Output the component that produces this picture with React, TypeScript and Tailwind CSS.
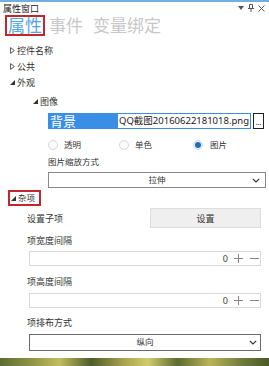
import React from "react";

const Collapsed = () => (
  <svg width="5" height="7" viewBox="0 0 5 7" className="shrink-0">
    <path d="M0.6 0.6 L4.4 3.5 L0.6 6.4 Z" fill="none" stroke="#555" strokeWidth="1" />
  </svg>
);

const Expanded = () => (
  <svg width="5" height="5" viewBox="0 0 5 5" className="shrink-0">
    <path d="M5 0 L5 5 L0 5 Z" fill="#333" />
  </svg>
);

const Chevron = () => (
  <svg width="8" height="5" viewBox="0 0 8 5" className="shrink-0">
    <path d="M0.8 0.8 L4 4 L7.2 0.8" fill="none" stroke="#333" strokeWidth="1.2" />
  </svg>
);

const Radio = ({ checked }: { checked?: boolean }) => (
  <span
    className={
      "w-[10px] h-[10px] rounded-full shrink-0 flex items-center justify-center " +
      (checked ? "border border-[#c9d9e8] bg-[#eef3f8]" : "border border-[#d8d8d8] bg-[#fafafa]")
    }
  >
    {checked ? <span className="w-[6px] h-[6px] rounded-full bg-[#1f6db5]" /> : null}
  </span>
);

const NumberBox = () => (
  <div className="ml-[29px] mr-[8px] h-[15px] border border-[#d9d9d9] bg-white flex items-center justify-end pr-[1px]">
    <span className="text-[9px] text-[#444] leading-none">0</span>
    <svg width="9" height="9" viewBox="0 0 9 9" className="ml-[6px]">
      <path d="M4.5 0 V9 M0 4.5 H9" stroke="#888" strokeWidth="1" />
    </svg>
    <svg width="9" height="9" viewBox="0 0 9 9" className="ml-[7px]">
      <path d="M0 4.5 H9" stroke="#888" strokeWidth="1" />
    </svg>
  </div>
);

export default function App() {
  return (
    <div className="w-[269px] h-[366px] overflow-hidden bg-white flex flex-col font-['Noto_Sans','Noto_Sans_CJK_SC',sans-serif] text-[#333] leading-none">
      {/* top accent */}
      <div className="h-[2px] bg-[#6fb0e0]" />
      {/* title bar */}
      <div className="h-[12px] flex items-center pl-[3px] pr-[4px]">
        <span className="text-[9px] text-[#222]">属性窗口</span>
        <div className="ml-auto flex items-center gap-[4px] text-[#555]">
          <svg width="6" height="4" viewBox="0 0 6 4">
            <path d="M0 0 H6 L3 4 Z" fill="#555" />
          </svg>
          <svg width="6" height="8" viewBox="0 0 6 8">
            <path d="M1.5 0.5 H4.5 V4.5 H1.5 Z M0 4.5 H6 M3 4.5 V8" fill="none" stroke="#555" strokeWidth="1" />
          </svg>
          <svg width="7" height="7" viewBox="0 0 7 7">
            <path d="M0.5 0.5 L6.5 6.5 M6.5 0.5 L0.5 6.5" stroke="#555" strokeWidth="1" />
          </svg>
        </div>
      </div>
      {/* tabs */}
      <div className="h-[23px] flex items-center pl-[5px]">
        <span className="border-2 border-[#c4262e] px-[1px] h-[21px] flex items-center text-[17px] text-[#55a6e4]">属性</span>
        <span className="ml-[4px] text-[17px] text-[#c8c8c8]">事件</span>
        <span className="ml-[10px] text-[17px] text-[#c8c8c8]">变量绑定</span>
      </div>
      {/* tree */}
      <div className="mt-[5px] h-[16px] flex items-center pl-[10px] gap-[2px]">
        <Collapsed />
        <span className="text-[9px]">控件名称</span>
      </div>
      <div className="h-[16px] flex items-center pl-[10px] gap-[2px]">
        <Collapsed />
        <span className="text-[9px]">公共</span>
      </div>
      <div className="h-[17px] flex items-center pl-[10px] gap-[2px]">
        <Expanded />
        <span className="text-[9px]">外观</span>
      </div>
      <div className="h-[20px] flex items-center pl-[33px] gap-[2px]">
        <Expanded />
        <span className="text-[9px]">图像</span>
      </div>
      {/* background image row */}
      <div className="mt-[2px] h-[16px] ml-[48px] flex items-stretch">
        <div className="w-[203px] bg-[#3a8ee6] flex items-center">
          <span className="pl-[2px] text-[13px] text-white">背景</span>
          <div className="ml-auto w-[134px] h-full bg-white border border-[#3a8ee6] flex items-center overflow-hidden">
            <span className="pl-[1px] text-[9.5px] text-[#222] whitespace-nowrap">QQ截图20160622181018.png</span>
          </div>
        </div>
        <div className="ml-[2px] w-[11px] border border-[#222] bg-white flex items-end justify-center pb-[2px]">
          <span className="text-[7px] leading-none text-[#222]">...</span>
        </div>
      </div>
      {/* radios */}
      <div className="mt-[8px] h-[16px] ml-[48px] flex items-center">
        <div className="w-[71px] flex items-center gap-[6px]">
          <Radio />
          <span className="text-[8.5px]">透明</span>
        </div>
        <div className="w-[74px] flex items-center gap-[6px]">
          <Radio />
          <span className="text-[8.5px]">单色</span>
        </div>
        <div className="flex items-center gap-[7px]">
          <Radio checked />
          <span className="text-[8.5px]">图片</span>
        </div>
      </div>
      <div className="mt-[1px] h-[16px] ml-[48px] flex items-center">
        <span className="text-[8.5px]">图片缩放方式</span>
      </div>
      <div className="mt-[2px] h-[16px] ml-[48px] mr-[3px] border border-[#8a8a8a] bg-white flex items-center px-[5px]">
        <span className="w-[8px]" />
        <span className="flex-1 text-center text-[8.5px]">拉伸</span>
        <Chevron />
      </div>
      {/* misc */}
      <div className="mt-[2px] h-[16px] ml-[8px] w-[33px] border-2 border-[#c4262e] flex items-center pl-[1px] gap-[2px]">
        <Expanded />
        <span className="text-[8.5px]">杂项</span>
      </div>
      <div className="mt-[2px] h-[20px] flex items-center pl-[27px] pr-[8px]">
        <span className="flex-1 text-[9px]">设置子项</span>
        <div className="w-[111px] h-full bg-[#efefef] border border-[#dedede] flex items-center justify-center">
          <span className="text-[9px]">设置</span>
        </div>
      </div>
      <div className="mt-[4px] h-[16px] flex items-center pl-[27px]">
        <span className="text-[9px]">项宽度间隔</span>
      </div>
      <div className="mt-[3px]">
        <NumberBox />
      </div>
      <div className="mt-[7px] h-[16px] flex items-center pl-[27px]">
        <span className="text-[9px]">项高度间隔</span>
      </div>
      <div className="mt-[4px]">
        <NumberBox />
      </div>
      <div className="mt-[6px] h-[16px] flex items-center pl-[27px]">
        <span className="text-[9px]">项排布方式</span>
      </div>
      <div className="mt-[4px] h-[17px] ml-[29px] mr-[8px] border border-[#6a6a6a] bg-white flex items-center px-[3px]">
        <span className="w-[8px]" />
        <span className="flex-1 text-center text-[8.5px]">纵向</span>
        <Chevron />
      </div>
      {/* desktop strip */}
      <div className="mt-auto h-[8px] bg-[linear-gradient(90deg,#5e6b33,#8f9447_12%,#c2bd5e_22%,#4f5c2a_34%,#a8a34f_46%,#d2cb6d_55%,#5d6a30_66%,#b9b45a_78%,#6f7b3b_90%,#4c5828)]" />
    </div>
  );
}
